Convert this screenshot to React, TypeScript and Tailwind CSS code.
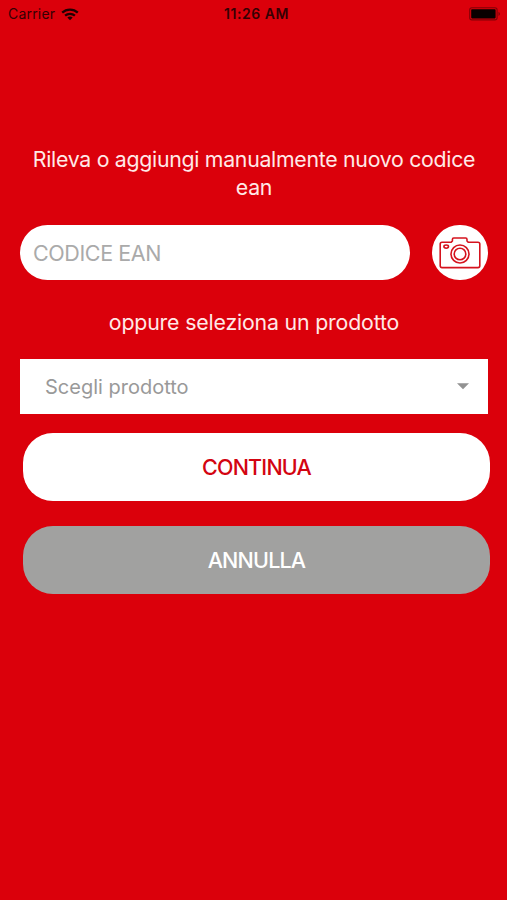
function StatusBar() {
  return (
    <header className="grid h-[28px] grid-cols-3 items-center pl-2 pr-[6px] text-[#350003]">
      <div className="flex items-center gap-[6px]">
        <span className="text-[14px] leading-none tracking-[0.2px]">Carrier</span>
        <svg width="18" height="13" viewBox="0 0 18 13" fill="none" stroke="#200002" strokeWidth="2.3">
          <path d="M1.2 4.7C5.5.6 12.5.6 16.8 4.7" />
          <path d="M4.1 7.7c2.8-2.5 7-2.5 9.8 0" />
          <path d="M9 12.2 6.3 9.5c1.6-1.4 3.8-1.4 5.4 0L9 12.2Z" fill="#200002" stroke="none" />
        </svg>
      </div>
      <span className="whitespace-nowrap pl-[4px] text-center text-[14px] font-semibold leading-none tracking-[0.55px]">11:26 AM</span>
      <svg className="justify-self-end" width="32" height="14" viewBox="0 0 32 14">
        <rect x="0.7" y="0.7" width="27.4" height="12.2" rx="2.2" fill="none" stroke="#820007" strokeWidth="1.1" />
        <rect x="2.2" y="2.2" width="24.4" height="9.2" rx="0.8" fill="#080000" />
        <path d="M29.5 4.7c2 1 2 3.3 0 4.2Z" fill="#820007" />
      </svg>
    </header>
  );
}

function CameraIcon() {
  return (
    <svg className="mt-[2px]" width="42" height="34" viewBox="0 0 42 34" fill="none" stroke="#d5131e" strokeWidth="1.6" strokeLinejoin="round">
      <path d="M3 5.2h9.2l1.2-1.3V2.4c0-.8.5-1.4 1.3-1.4h12c.8 0 1.3.6 1.3 1.4v1.5l1.2 1.3H39c1.1 0 1.8.7 1.8 1.8v21.8c0 1.1-.7 1.8-1.8 1.8H3c-1.1 0-1.8-.7-1.8-1.8V7c0-1.1.7-1.8 1.8-1.8Z" />
      <circle cx="21" cy="17" r="9" />
      <circle cx="21" cy="17" r="5.8" />
      <ellipse cx="7.2" cy="9.6" rx="2.3" ry="1.6" />
    </svg>
  );
}

export default function App() {
  return (
    <main className="h-[900px] w-[507px] overflow-hidden bg-[#db000b] font-['Inter','Liberation_Sans',sans-serif]">
      <StatusBar />
      <div className="flex flex-col pl-[20px] pr-[19px] pt-[117px]">
        <p className="text-center text-[21.3px] leading-[28px] tracking-[-0.29px] text-[#ffe9e7]">
          Rileva o aggiungi manualmente nuovo codice
          <br />
          ean
        </p>
        <div className="mt-6 flex items-center justify-between">
          <input
            aria-label="CODICE EAN"
            placeholder="CODICE EAN"
            className="h-[55px] w-[390px] rounded-full bg-white px-[13px] text-[21.5px] tracking-[-0.4px] placeholder:text-[#aaaaaa] outline-none"
          />
          <button aria-label="Fotocamera" className="grid h-[55px] w-[56px] place-items-center rounded-full bg-white">
            <CameraIcon />
          </button>
        </div>
        <p className="mt-[27.5px] text-center text-[21.3px] leading-[28px] tracking-[-0.17px] text-[#ffe9e7]">
          oppure seleziona un prodotto
        </p>
        <button className="mt-[23.5px] flex h-[55px] items-center justify-between bg-white pl-[25px] pr-[19px] text-[20px] text-[#999999]">
          <span>Scegli prodotto</span>
          <svg width="12" height="7" viewBox="0 0 12 7">
            <path d="M0 .3h12L6 6.3Z" fill="#929292" />
          </svg>
        </button>
        <div className="ml-[3px] mt-[19px] flex w-[467px] flex-col gap-[25px] text-[21.5px] font-medium tracking-[-0.8px]">
          <button className="h-[68px] rounded-[30px] bg-white pt-px text-[#d30411]">CONTINUA</button>
          <button className="h-[68px] rounded-[30px] bg-[#a1a1a0] pt-px text-white">ANNULLA</button>
        </div>
      </div>
    </main>
  );
}
